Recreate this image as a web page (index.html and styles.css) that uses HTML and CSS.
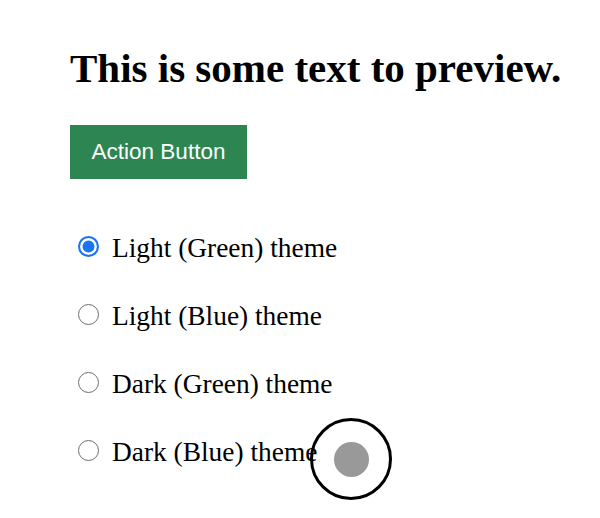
FILE: index.html
```html
<!DOCTYPE html>
<html>
<head>
<meta charset="utf-8">
<link rel="stylesheet" href="styles.css">
</head>
<body>
<main class="page">
  <h1 class="title">This is some text to preview.</h1>
  <button class="action">Action Button</button>
  <form class="themes">
    <label class="option"><input type="radio" name="theme" checked><span>Light (Green) theme</span></label>
    <label class="option"><input type="radio" name="theme"><span>Light (Blue) theme</span></label>
    <label class="option"><input type="radio" name="theme"><span>Dark (Green) theme</span></label>
    <label class="option"><input type="radio" name="theme"><span>Dark (Blue) theme</span></label>
  </form>
</main>
<div class="cursor"><div class="cursor-dot"></div></div>
</body>
</html>
```
FILE: styles.css
```css
html, body {
  margin: 0;
  padding: 0;
  background: #ffffff;
}
body {
  width: 600px;
  height: 518px;
  position: relative;
  overflow: hidden;
  font-family: "Liberation Serif", "Times New Roman", serif;
  color: #000;
}
.page {
  padding: 0 0 0 70px;
  display: flex;
  flex-direction: column;
  align-items: flex-start;
}
.title {
  font-size: 41px;
  font-weight: bold;
  line-height: 52px;
  margin: 42px 0 0 0;
  white-space: nowrap;
}
.action {
  margin-top: 31px;
  background: #2d8652;
  color: #ffffff;
  border: none;
  font-family: "Liberation Sans", Arial, sans-serif;
  font-size: 22.5px;
  line-height: 26px;
  padding: 14px 0;
  width: 177px;
  height: 54px;
}
.themes {
  margin-top: 53px;
  display: flex;
  flex-direction: column;
  gap: 39px;
}
.option {
  display: flex;
  align-items: center;
  gap: 13px;
  font-size: 27.4px;
  line-height: 29px;
}
.option span {
  position: relative;
  top: 2px;
}
.option input {
  appearance: none;
  -webkit-appearance: none;
  margin: 0 0 0 8px;
  width: 21px;
  height: 21px;
  border-radius: 50%;
  border: 1.5px solid #6e6e6e;
  background: #fff;
  box-sizing: border-box;
}
.option input:checked {
  border: 2px solid #1a73f0;
  box-shadow: inset 0 0 0 2.5px #fff, inset 0 0 0 10px #1a73f0;
}
.cursor {
  position: absolute;
  left: 310px;
  top: 418px;
  width: 82px;
  height: 82px;
  box-sizing: border-box;
  border: 3px solid #000;
  border-radius: 50%;
  display: flex;
  align-items: center;
  justify-content: center;
}
.cursor-dot {
  width: 35px;
  height: 35px;
  border-radius: 50%;
  background: #999999;
}
```
